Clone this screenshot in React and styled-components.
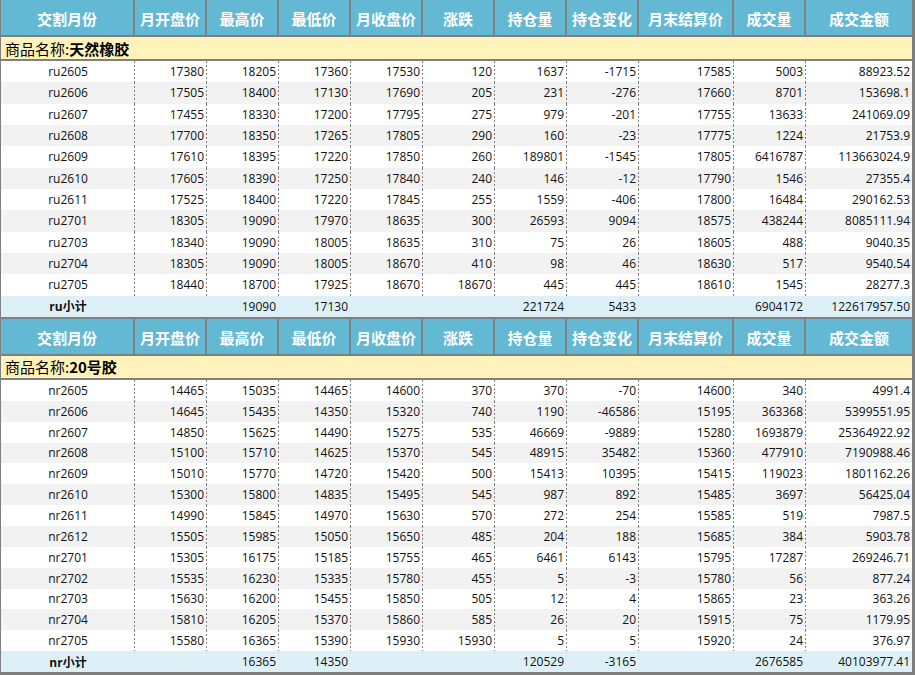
import styled, { createGlobalStyle } from 'styled-components';

const GlobalStyle = createGlobalStyle`
    html, body {
        margin: 0;
        padding: 0;
        background: #ffffff;
    }
    * {
        box-sizing: border-box;
    }
`;

const columns = ['交割月份', '月开盘价', '最高价', '最低价', '月收盘价', '涨跌', '持仓量', '持仓变化', '月末结算价', '成交量', '成交金额'];

const sections = [
    {
        name: '天然橡胶',
        code: 'ru',
        rowHeight: 21.33,
        rows: [
            ['ru2605', '17380', '18205', '17360', '17530', '120', '1637', '-1715', '17585', '5003', '88923.52'],
            ['ru2606', '17505', '18400', '17130', '17690', '205', '231', '-276', '17660', '8701', '153698.1'],
            ['ru2607', '17455', '18330', '17200', '17795', '275', '979', '-201', '17755', '13633', '241069.09'],
            ['ru2608', '17700', '18350', '17265', '17805', '290', '160', '-23', '17775', '1224', '21753.9'],
            ['ru2609', '17610', '18395', '17220', '17850', '260', '189801', '-1545', '17805', '6416787', '113663024.9'],
            ['ru2610', '17605', '18390', '17250', '17840', '240', '146', '-12', '17790', '1546', '27355.4'],
            ['ru2611', '17525', '18400', '17220', '17845', '255', '1559', '-406', '17800', '16484', '290162.53'],
            ['ru2701', '18305', '19090', '17970', '18635', '300', '26593', '9094', '18575', '438244', '8085111.94'],
            ['ru2703', '18340', '19090', '18005', '18635', '310', '75', '26', '18605', '488', '9040.35'],
            ['ru2704', '18305', '19090', '18005', '18670', '410', '98', '46', '18630', '517', '9540.54'],
            ['ru2705', '18440', '18700', '17925', '18670', '18670', '445', '445', '18610', '1545', '28277.3'],
        ],
        total: ['ru小计', '', '19090', '17130', '', '', '221724', '5433', '', '6904172', '122617957.50'],
    },
    {
        name: '20号胶',
        code: 'nr',
        rowHeight: 20.86,
        rows: [
            ['nr2605', '14465', '15035', '14465', '14600', '370', '370', '-70', '14600', '340', '4991.4'],
            ['nr2606', '14645', '15435', '14350', '15320', '740', '1190', '-46586', '15195', '363368', '5399551.95'],
            ['nr2607', '14850', '15625', '14490', '15275', '535', '46669', '-9889', '15280', '1693879', '25364922.92'],
            ['nr2608', '15100', '15710', '14625', '15370', '545', '48915', '35482', '15360', '477910', '7190988.46'],
            ['nr2609', '15010', '15770', '14720', '15420', '500', '15413', '10395', '15415', '119023', '1801162.26'],
            ['nr2610', '15300', '15800', '14835', '15495', '545', '987', '892', '15485', '3697', '56425.04'],
            ['nr2611', '14990', '15845', '14970', '15630', '570', '272', '254', '15585', '519', '7987.5'],
            ['nr2612', '15505', '15985', '15050', '15650', '485', '204', '188', '15685', '384', '5903.78'],
            ['nr2701', '15305', '16175', '15185', '15755', '465', '6461', '6143', '15795', '17287', '269246.71'],
            ['nr2702', '15535', '16230', '15335', '15780', '455', '5', '-3', '15780', '56', '877.24'],
            ['nr2703', '15630', '16200', '15455', '15850', '505', '12', '4', '15865', '23', '363.26'],
            ['nr2704', '15810', '16205', '15370', '15860', '585', '26', '20', '15915', '75', '1179.95'],
            ['nr2705', '15580', '16365', '15390', '15930', '15930', '5', '5', '15920', '24', '376.97'],
        ],
        total: ['nr小计', '', '16365', '14350', '', '', '120529', '-3165', '', '2676585', '40103977.41'],
    },
];

const App = () => {
    return (
        <>
            <GlobalStyle />
            <Frame>
                {sections.map((section, si) => (
                    <section key={section.code}>
                        <HeaderRow $first={si === 0}>
                            {columns.map((col) => (
                                <HeadCell key={col}>{col}</HeadCell>
                            ))}
                        </HeaderRow>
                        <CategoryRow>
                            商品名称:<b>{section.name}</b>
                        </CategoryRow>
                        {section.rows.map((row, ri) => (
                            <DataRow key={row[0]} $h={section.rowHeight} $striped={ri % 2 === 1}>
                                {row.map((cell, ci) => (
                                    <Cell key={ci} $center={ci === 0}>
                                        {cell}
                                    </Cell>
                                ))}
                            </DataRow>
                        ))}
                        <TotalRow $h={section.rowHeight}>
                            {section.total.map((cell, ci) => (
                                <TotalCell key={ci} $label={ci === 0}>
                                    {cell}
                                </TotalCell>
                            ))}
                        </TotalRow>
                    </section>
                ))}
            </Frame>
        </>
    );
};

export default App;

const gridCols = '134px 72px 72px 72px 72px 72px 72px 72px 95px 72px 106px';

const Frame = styled.div`
    width: 915px;
    height: 675px;
    overflow: hidden;
    background: #ffffff;
    border-left: 1px solid #7f7f7f;
    border-right: 3px solid #7f7f7f;
    border-bottom: 3px solid #7f7f7f;
    font-family: 'Open Sans', 'Noto Sans CJK SC', sans-serif;
    color: #111111;
`;

const HeaderRow = styled.div`
    display: grid;
    grid-template-columns: ${gridCols};
    height: ${(p) => (p.$first ? 37 : 39)}px;
    border-top: ${(p) => (p.$first ? 0 : 2)}px solid #7f7f7f;
    border-bottom: 2px solid #7f7f7f;
    background: #63b8d4;
`;

const HeadCell = styled.div`
    display: flex;
    align-items: center;
    justify-content: center;
    padding-top: 2px;
    color: #ffffff;
    font-family: 'Noto Sans CJK SC', sans-serif;
    font-size: 15px;
    font-weight: bold;
    white-space: nowrap;
    border-right: 2px solid #7f7f7f;
    &:last-child {
        border-right: 0;
    }
`;

const CategoryRow = styled.div`
    height: 24px;
    display: flex;
    align-items: center;
    padding-left: 4px;
    background: #fff2bb;
    border-bottom: 2px solid #7f7f7f;
    font-family: 'Noto Sans CJK SC', sans-serif;
    font-size: 15px;
    color: #000000;
    b {
        font-weight: bold;
    }
`;

const DataRow = styled.div`
    display: grid;
    grid-template-columns: ${gridCols};
    height: ${(p) => p.$h}px;
    background: ${(p) => (p.$striped ? '#f2f2f2' : '#ffffff')};
`;

const Cell = styled.div`
    display: flex;
    align-items: center;
    justify-content: ${(p) => (p.$center ? 'center' : 'flex-end')};
    padding-right: ${(p) => (p.$center ? 0 : 3)}px;
    font-size: 12px;
    white-space: nowrap;
    background-image: linear-gradient(#808080 50%, transparent 50%);
    background-size: 1px 4px;
    background-repeat: repeat-y;
    background-position: right top;
    &:last-child {
        background-image: none;
        padding-right: 2px;
    }
`;

const TotalRow = styled.div`
    display: grid;
    grid-template-columns: ${gridCols};
    height: ${(p) => p.$h}px;
    background: #def0f7;
`;

const TotalCell = styled.div`
    display: flex;
    align-items: center;
    justify-content: ${(p) => (p.$label ? 'center' : 'flex-end')};
    padding-right: ${(p) => (p.$label ? 0 : 3)}px;
    font-size: 12px;
    font-weight: ${(p) => (p.$label ? 'bold' : 'normal')};
    white-space: nowrap;
    &:last-child {
        padding-right: 2px;
    }
`;
